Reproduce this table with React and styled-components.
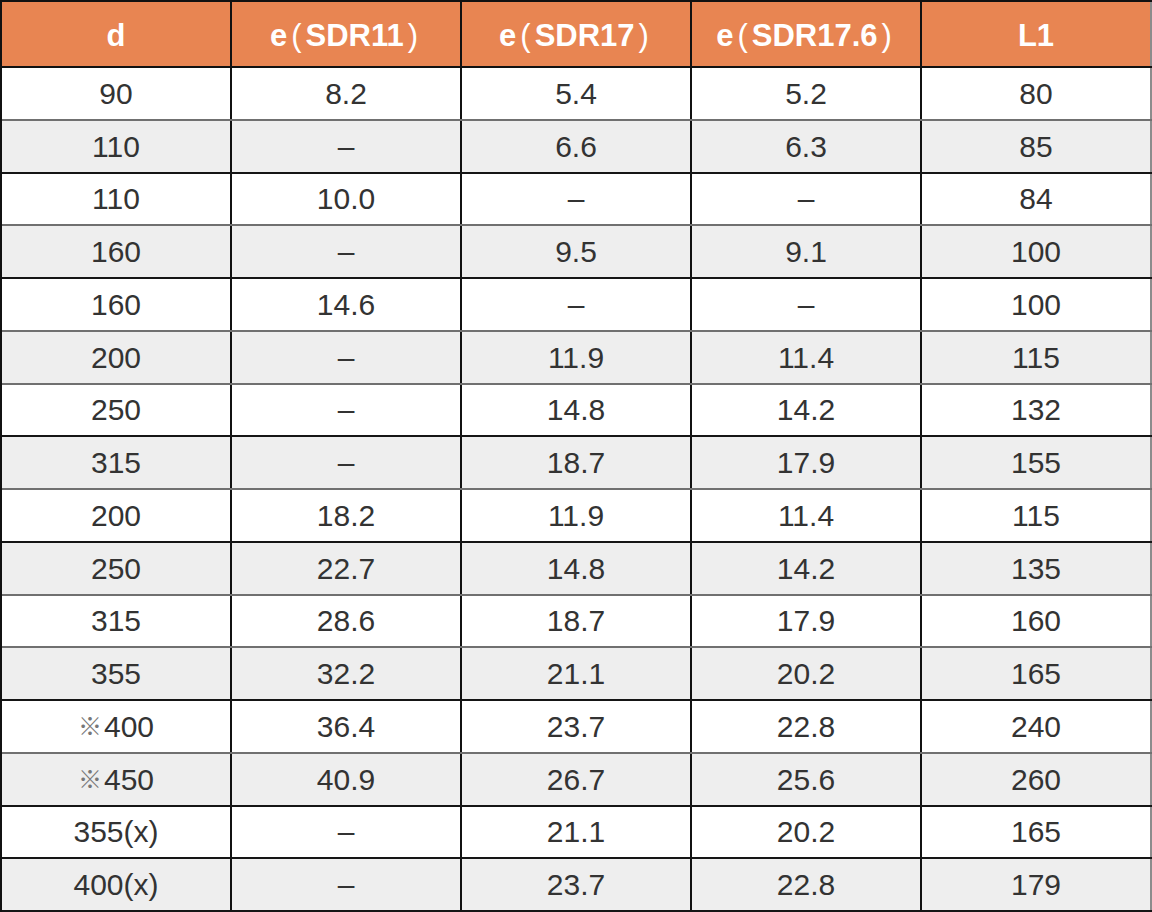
import React from "react";
import styled, { createGlobalStyle } from "styled-components";

const GlobalStyle = createGlobalStyle`
	html, body {
		margin: 0;
		padding: 0;
		background: #ffffff;
	}
	body {
		font-family: "Liberation Sans", Arial, "Noto Sans CJK JP", sans-serif;
	}
`;

const Table = styled.div`
	width: 1152px;
	height: 912px;
	box-sizing: border-box;
	display: grid;
	grid-template-rows: 66px repeat(16, 1fr);
	border-top: 2px solid #111;
	border-left: 2px solid #111;
`;

const Row = styled.div`
	display: grid;
	grid-template-columns: repeat(5, 1fr);
	background: ${(p) => (p.$alt ? "#eeeeee" : "#ffffff")};
	border-bottom: 2px solid ${(p) => p.$line || "#111"};
	box-sizing: border-box;
	min-height: 0;
`;

const HeadRow = styled(Row)`
	background: #e88552;
	border-bottom: 2px solid #111;
`;

const Cell = styled.div`
	display: flex;
	align-items: center;
	justify-content: center;
	border-right: 2px solid ${(p) => (p.$last ? "#8c8c8c" : "#111")};
	font-size: 30px;
	color: #333333;
	line-height: 1;
	padding-top: 1px;
`;

const HeadCell = styled(Cell)`
	color: #ffffff;
	font-weight: bold;
	font-size: 31px;
	padding-top: 2px;
`;

const Paren = styled.span`
	font-weight: normal;
	margin: 0 4px;
`;

const Mark = styled.span`
	color: #777;
	font-size: 24px;
	margin-right: 2px;
`;

const headers = [
	["d"],
	["e", "SDR11"],
	["e", "SDR17"],
	["e", "SDR17.6"],
	["L1"],
];

const rows = [
	["90", "8.2", "5.4", "5.2", "80"],
	["110", "–", "6.6", "6.3", "85"],
	["110", "10.0", "–", "–", "84"],
	["160", "–", "9.5", "9.1", "100"],
	["160", "14.6", "–", "–", "100"],
	["200", "–", "11.9", "11.4", "115"],
	["250", "–", "14.8", "14.2", "132"],
	["315", "–", "18.7", "17.9", "155"],
	["200", "18.2", "11.9", "11.4", "115"],
	["250", "22.7", "14.8", "14.2", "135"],
	["315", "28.6", "18.7", "17.9", "160"],
	["355", "32.2", "21.1", "20.2", "165"],
	["※400", "36.4", "23.7", "22.8", "240"],
	["※450", "40.9", "26.7", "25.6", "260"],
	["355(x)", "–", "21.1", "20.2", "165"],
	["400(x)", "–", "23.7", "22.8", "179"],
];

// line under each row, some scanned lighter than others
const lines = [
	"#707070", "#151515", "#707070", "#151515",
	"#707070", "#707070", "#151515", "#707070",
	"#151515", "#707070", "#707070", "#151515",
	"#707070", "#151515", "#151515", "#151515",
];

const renderValue = (v) => {
	if (v.startsWith("※")) {
		return (
			<>
				<Mark>※</Mark>
				{v.slice(1)}
			</>
		);
	}
	return v;
};

const App = () => {
	return (
		<>
			<GlobalStyle />
			<Table>
				<HeadRow>
					{headers.map((h, i) => (
						<HeadCell key={i} $last={i === 4}>
							{h.length === 1 ? (
								h[0]
							) : (
								<>
									{h[0]}
									<Paren>(</Paren>
									{h[1]}
									<Paren>)</Paren>
								</>
							)}
						</HeadCell>
					))}
				</HeadRow>
				{rows.map((r, i) => (
					<Row key={i} $alt={i % 2 === 1} $line={lines[i]}>
						{r.map((v, j) => (
							<Cell key={j} $last={j === 4}>
								{renderValue(v)}
							</Cell>
						))}
					</Row>
				))}
			</Table>
		</>
	);
};

export default App;
